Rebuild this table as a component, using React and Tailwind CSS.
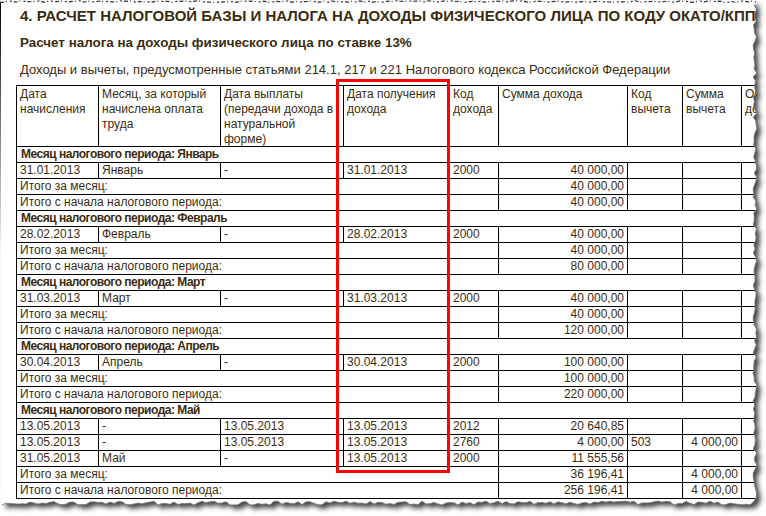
import React from 'react';

const W = ['w-[82px]', 'w-[122px]', 'w-[123px]', 'w-[106px]', 'w-[49px]', 'w-[129px]', 'w-[55px]', 'w-[59px]', 'w-[90px]'];
const RIGHT = [false, false, false, false, false, true, false, true, true];

const HEAD = [
  ['Дата', 'начисления'],
  ['Месяц, за который', 'начислена оплата', 'труда'],
  ['Дата выплаты', '(передачи дохода в', 'натуральной', 'форме)'],
  ['Дата получения', 'дохода'],
  ['Код', 'дохода'],
  ['Сумма дохода'],
  ['Код', 'вычета'],
  ['Сумма', 'вычета'],
  ['Облагаемый', 'доход'],
];

const MONTH = 'Итого за месяц:';
const YEAR = 'Итого с начала налогового периода:';

const rows = [
  { t: 'g', text: 'Месяц налогового периода: Январь' },
  { t: 'r', c: ['31.01.2013', 'Январь', '-', '31.01.2013', '2000', '40 000,00', '', '', ''] },
  { t: 's', text: MONTH, c: ['40 000,00', '', '', ''] },
  { t: 's', text: YEAR, c: ['40 000,00', '', '', ''] },
  { t: 'g', text: 'Месяц налогового периода: Февраль' },
  { t: 'r', c: ['28.02.2013', 'Февраль', '-', '28.02.2013', '2000', '40 000,00', '', '', ''] },
  { t: 's', text: MONTH, c: ['40 000,00', '', '', ''] },
  { t: 's', text: YEAR, c: ['80 000,00', '', '', ''] },
  { t: 'g', text: 'Месяц налогового периода: Март' },
  { t: 'r', c: ['31.03.2013', 'Март', '-', '31.03.2013', '2000', '40 000,00', '', '', ''] },
  { t: 's', text: MONTH, c: ['40 000,00', '', '', ''] },
  { t: 's', text: YEAR, c: ['120 000,00', '', '', ''] },
  { t: 'g', text: 'Месяц налогового периода: Апрель' },
  { t: 'r', c: ['30.04.2013', 'Апрель', '-', '30.04.2013', '2000', '100 000,00', '', '', ''] },
  { t: 's', text: MONTH, c: ['100 000,00', '', '', ''] },
  { t: 's', text: YEAR, c: ['220 000,00', '', '', ''] },
  { t: 'g', text: 'Месяц налогового периода: Май' },
  { t: 'r', c: ['13.05.2013', '-', '13.05.2013', '13.05.2013', '2012', '20 640,85', '', '', ''] },
  { t: 'r', c: ['13.05.2013', '-', '13.05.2013', '13.05.2013', '2760', '4 000,00', '503', '4 000,00', ''] },
  { t: 'r', c: ['31.05.2013', 'Май', '-', '13.05.2013', '2000', '11 555,56', '', '', ''] },
  { t: 's', text: MONTH, c: ['36 196,41', '', '4 000,00', ''] },
  { t: 's', text: YEAR, c: ['256 196,41', '', '4 000,00', ''] },
];

const Cell = ({ w, right, children }) => (
  <div className={`${w} shrink-0 border-r border-black px-[3px] overflow-hidden whitespace-nowrap ${right ? 'text-right' : ''}`}>
    {children}
  </div>
);

const Row = ({ row }) => {
  if (row.t === 'g') {
    return (
      <div className="h-4 border-b border-black pl-[4px] tracking-[-0.5px] font-bold whitespace-nowrap">
        {row.text}
      </div>
    );
  }
  if (row.t === 's') {
    return (
      <div className="flex h-4 border-b border-black">
        <Cell w="w-[482px]">{row.text}</Cell>
        {row.c.map((c, i) => (
          <Cell key={i} w={W[i + 5]} right={RIGHT[i + 5]}>{c}</Cell>
        ))}
      </div>
    );
  }
  return (
    <div className="flex h-4 border-b border-black">
      {row.c.map((c, i) => (
        <Cell key={i} w={W[i]} right={RIGHT[i]}>{c}</Cell>
      ))}
    </div>
  );
};

// torn paper edge, drawn once
function makeEdges() {
  let s = 17;
  const r = () => {
    s = (s * 9301 + 49297) % 233280;
    return s / 233280;
  };
  const top = [];
  for (let x = 0; x <= 756; x += 4) top.push([x, 1.6 + (r() - 0.5) * 1.6]);
  const right = [];
  for (let y = 5; y <= 500; y += 4) right.push([755 + (r() - 0.5) * 4, y]);
  const bottom = [];
  for (let x = 754; x >= 0; x -= 4) bottom.push([x, 503 + (r() - 0.5) * 4]);
  const pts = [...top, ...right, ...bottom];
  const toD = (p) => 'M' + p.map(([x, y]) => `${x.toFixed(1)} ${y.toFixed(1)}`).join(' L');
  return {
    outline: toD(pts) + ' Z',
    top: toD(top),
    rb: toD([...right, ...bottom]),
  };
}

const edges = makeEdges();

const TornEdges = () => (
  <svg className="absolute inset-0 pointer-events-none" width="766" height="516" viewBox="0 0 766 516">
    <defs>
      <clipPath id="outside">
        <path clipRule="evenodd" d={`M0 0 H766 V516 H0 Z ${edges.outline}`} />
      </clipPath>
      <filter id="soft" x="-5%" y="-5%" width="110%" height="110%">
        <feGaussianBlur stdDeviation="2.6" />
      </filter>
    </defs>
    <path fillRule="evenodd" fill="#ffffff" d={`M0 0 H766 V516 H0 Z ${edges.outline}`} />
    <g clipPath="url(#outside)">
      <path d={edges.outline} fill="#333" opacity="0.9" transform="translate(4 4)" filter="url(#soft)" />
    </g>
    <path d={edges.rb} fill="none" stroke="#777" strokeWidth="0.8" />
    <path d={edges.top} fill="none" stroke="#333" strokeWidth="1.2" strokeDasharray="4 2 1 3 2 2" />
  </svg>
);

export default function App() {
  return (
    <div className="relative w-[766px] h-[516px] overflow-hidden bg-white text-[#3b2c10] font-['Liberation_Sans',Arial,sans-serif]">
      <div className="w-[756px] h-[504px] overflow-hidden border-l border-black pt-2">
        <div className="pl-[19px] whitespace-nowrap">
          <h1 className="text-[15px] leading-4 font-bold">
            4. РАСЧЕТ НАЛОГОВОЙ БАЗЫ И НАЛОГА НА ДОХОДЫ ФИЗИЧЕСКОГО ЛИЦА ПО КОДУ ОКАТО/КПП
          </h1>
          <h2 className="mt-[11px] text-[13.4px] leading-[15px] font-bold">
            Расчет налога на доходы физического лица по ставке 13%
          </h2>
          <p className="mt-3 text-[13px] leading-[15px]">
            Доходы и вычеты, предусмотренные статьями 214.1, 217 и 221 Налогового кодекса Российской Федерации
          </p>
        </div>

        <div className="ml-[15px] mt-2 w-max border-l border-t border-black text-[12px] leading-[15px]">
          <div className="flex h-[61px] border-b border-black">
            {HEAD.map((lines, i) => (
              <div key={i} className={`${W[i]} shrink-0 border-r border-black px-[3px] pt-[1px] overflow-hidden whitespace-nowrap`}>
                {lines.map((l, j) => (
                  <div key={j}>{l}</div>
                ))}
              </div>
            ))}
          </div>
          {rows.map((row, i) => (
            <Row key={i} row={row} />
          ))}
        </div>
      </div>

      {/* red highlight around the column */}
      <div className="absolute left-[336px] top-[79px] w-[114px] h-[394px] border-[3px] border-[#ff0000]" />

      <TornEdges />
    </div>
  );
}
